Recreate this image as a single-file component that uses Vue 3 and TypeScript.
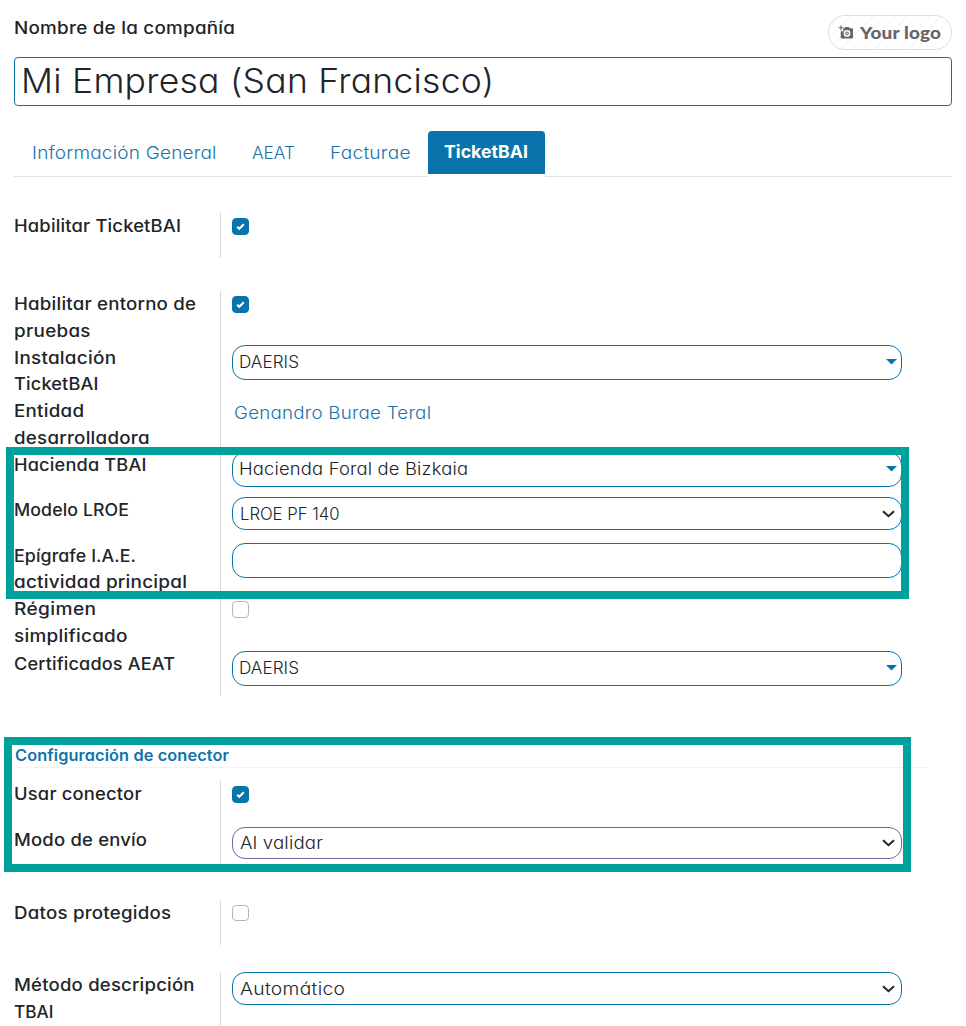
<script setup lang="ts">
import { ref, type Directive } from 'vue'

interface Line { text: string; w: number }
interface Row {
  height: number
  label: Line[]
  kind: 'check' | 'many2one' | 'select' | 'input' | 'link'
  checked?: boolean
  value?: Line
  fieldHeight?: number
  focused?: boolean
  tight?: boolean
}
interface Group { id: string; title?: Line; rows: Row[] }

const l = (text: string, w: number): Line => ({ text, w })

// Widens the letters of a text, with a little tracking, so that it takes the given width in pixels.
const vFit: Directive<HTMLElement, number> = {
  mounted(el, { value }) {
    const natural = el.getBoundingClientRect().width
    const count = (el.textContent ?? '').length
    const scale = 1 + (value / natural - 1) * 0.8
    el.style.letterSpacing = `${(value / scale - natural) / (count - 1)}px`
    el.style.transform = `scaleX(${scale})`
  },
}

const tabs = [
  { name: l('Información General', 184.5), id: 'general' },
  { name: l('AEAT', 43), id: 'aeat' },
  { name: l('Facturae', 80.5), id: 'facturae' },
  { name: l('TicketBAI', 84), id: 'tbai' },
]
const active = ref('tbai')

const groups: Group[] = [
  { id: 'enable', rows: [{ height: 45, kind: 'check', checked: true, label: [l('Habilitar TicketBAI', 167)] }] },
  {
    id: 'main',
    rows: [
      { height: 54, kind: 'check', checked: true, label: [l('Habilitar entorno de', 182), l('pruebas', 76.5)] },
      { height: 53, tight: true, kind: 'many2one', fieldHeight: 35, value: l('DAERIS', 60), label: [l('Instalación', 102), l('TicketBAI', 84.5)] },
      { height: 54, kind: 'link', value: l('Genandro Burae Teral', 197), label: [l('Entidad', 70), l('desarrolladora', 135.5)] },
      { height: 45, kind: 'many2one', fieldHeight: 35, value: l('Hacienda Foral de Bizkaia', 229), label: [l('Hacienda TBAI', 132.5)] },
      { height: 46, kind: 'select', fieldHeight: 33, value: l('LROE PF 140', 99.5), label: [l('Modelo LROE', 115)] },
      { height: 53, tight: true, kind: 'input', fieldHeight: 35, label: [l('Epígrafe I.A.E.', 122), l('actividad principal', 173)] },
      { height: 55, kind: 'check', label: [l('Régimen', 82), l('simplificado', 113.5)] },
      { height: 45, kind: 'many2one', fieldHeight: 35, value: l('DAERIS', 60), label: [l('Certificados AEAT', 161)] },
    ],
  },
  {
    id: 'connector',
    title: l('Configuración de conector', 214),
    rows: [
      { height: 46, kind: 'check', checked: true, label: [l('Usar conector', 127.5)] },
      { height: 45, kind: 'select', fieldHeight: 32, focused: true, value: l('Al validar', 83), label: [l('Modo de envío', 133)] },
    ],
  },
  { id: 'protected', rows: [{ height: 45, kind: 'check', label: [l('Datos protegidos', 157)] }] },
  {
    id: 'method',
    rows: [{ height: 54, kind: 'select', fieldHeight: 33, value: l('Automático', 105), label: [l('Método descripción', 180.5), l('TBAI', 39.5)] }],
  },
]
</script>

<template>
  <main class="page">
    <header class="top">
      <div class="label"><span v-fit="221">Nombre de la compañía</span></div>
      <div class="logo">
        <svg width="16" height="15" viewBox="0 0 16 15" aria-hidden="true">
          <path d="M3 0.4v4.8M0.6 2.8h4.8" stroke="#666" stroke-width="1.1" />
          <path fill="#666" fill-rule="evenodd" d="M6.4 3.2L7.2 2h3.6l.9 1.2h2.3q1 0 1 1v8.3q0 1-1 1H3.7q-1 0-1-1V6.2h2.6V3.2zM9 5a3.4 3.4 0 1 0 0 6.8 3.4 3.4 0 0 0 0-6.8z" />
          <circle cx="9" cy="8.4" r="1.8" fill="#666" />
          <circle cx="9" cy="8.4" r="0.8" fill="#fff" />
        </svg>
        <span v-fit="81">Your logo</span>
      </div>
    </header>
    <div class="company"><span v-fit="473">Mi Empresa (San Francisco)</span></div>

    <nav class="tabs">
      <div v-for="t in tabs" :key="t.id" class="tab" :class="[t.id, { active: t.id === active }]" @click="active = t.id">
        <span v-fit="t.name.w">{{ t.name.text }}</span>
      </div>
      <div class="rest"></div>
    </nav>

    <section v-for="g in groups" :key="g.id" class="group" :class="g.id">
      <h2 v-if="g.title" class="heading"><span v-fit="g.title.w">{{ g.title.text }}</span></h2>
      <div v-for="(r, i) in g.rows" :key="i" class="row" :class="{ tight: r.tight }" :style="{ height: r.height + 'px' }">
        <div class="label">
          <div v-for="line in r.label" :key="line.text" class="line"><span v-fit="line.w">{{ line.text }}</span></div>
        </div>
        <div class="cell">
          <div v-if="r.kind === 'check'" class="check" :class="{ on: r.checked }">
            <svg v-if="r.checked" width="9" height="8" viewBox="0 0 9 8" aria-hidden="true">
              <path d="M1.2 3.7L3.3 5.8L7.8 1.3" fill="none" stroke="#fff" stroke-width="2.1" />
            </svg>
          </div>
          <div v-else-if="r.kind === 'link' && r.value" class="link"><span v-fit="r.value.w">{{ r.value.text }}</span></div>
          <div v-else class="field" :class="[r.kind, { focused: r.focused }]" :style="{ height: r.fieldHeight + 'px' }">
            <span v-if="r.value" v-fit="r.value.w">{{ r.value.text }}</span>
            <svg v-if="r.kind === 'many2one'" class="caret" width="11" height="6" viewBox="0 0 11 6" aria-hidden="true">
              <path d="M0 0h11L5.5 5.5z" fill="#0874ab" />
            </svg>
            <svg v-if="r.kind === 'select'" class="chevron" width="13" height="8" viewBox="0 0 13 8" aria-hidden="true">
              <path d="M1 1.2L6.5 6.2L12 1.2" fill="none" stroke="#212529" stroke-width="2" />
            </svg>
          </div>
        </div>
      </div>
    </section>

    <div class="highlight tax"></div>
    <div class="highlight connector-box"></div>
  </main>
</template>

<style>
html, body { background: #fff; overflow: hidden; }
</style>

<style scoped>
.page {
  position: relative;
  box-sizing: border-box;
  width: 966px;
  height: 1026px;
  padding: 15px 14px 0;
  overflow: hidden;
  background: #fff;
  color: #212529;
  font-family: Inter, "Open Sans", sans-serif;
  font-feature-settings: "cv11";
  font-size: 17px;
  font-weight: 300;
}
.page * { box-sizing: border-box; }
span { display: inline-block; white-space: nowrap; transform-origin: 0 50%; }
.label { font-weight: 550; line-height: 27px; }
.line { height: 27px; }
.tight .line:first-child { height: 26px; }
.top { display: flex; justify-content: space-between; height: 42px; }
.logo {
  display: flex;
  align-items: center;
  gap: 6px;
  width: 124px;
  height: 35px;
  padding-left: 9px;
  border: 1px solid #dcdfe2;
  border-radius: 17px;
  color: #666;
  font: 900 17.5px/33px Lato, sans-serif;
  background: repeating-linear-gradient(135deg, #fff 0 7px, #f6f6f6 7px 8px);
}
.company {
  height: 49px;
  padding-left: 6px;
  border: 1px solid #0874ab;
  border-radius: 4px;
  font-size: 33.5px;
  line-height: 46px;
}
.tabs { display: flex; height: 46px; margin-top: 25px; color: #1c72a8; font-size: 17.5px; }
.tab { padding: 9px 0 0 18px; border-bottom: 1px solid #dee2e6; line-height: 26px; }
.tab.general { width: 220px; }
.tab.aeat { width: 78px; }
.tab.facturae { width: 116px; }
.tab.active {
  width: 117px;
  height: 43px;
  padding: 8px 0 0 16px;
  border: 0;
  border-radius: 4px 4px 0 0;
  background: #0874ab;
  color: #fff;
  font-weight: 650;
}
.rest { flex: 1; border-bottom: 1px solid #dee2e6; }
.group.enable { margin-top: 36px; }
.group.main { margin-top: 33px; }
.group.connector { margin-top: 46px; }
.group.protected { margin-top: 28px; }
.group.method { margin-top: 27px; }
.heading {
  width: 913px;
  height: 26px;
  margin: 0 0 13px 1px;
  border-bottom: 1px solid #f2f3f4;
  color: #1072a9;
  font-size: 15.5px;
  font-weight: 600;
  line-height: 27px;
}
.row { display: grid; grid-template-columns: 206px 682px; }
.cell { padding-left: 11px; border-left: 1px solid #d5d8dc; }
.check {
  display: flex;
  align-items: center;
  justify-content: center;
  width: 17px;
  height: 17px;
  margin-top: 5px;
  border: 1px solid #b3b7bd;
  border-radius: 4px;
}
.protected .check { height: 16px; }
.check.on { border-color: #0874ab; background: #0874ab; }
.check svg { display: block; }
.link { padding: 2px 0 0 2px; color: #1c72a8; line-height: 27px; }
.field {
  display: flex;
  align-items: center;
  justify-content: space-between;
  width: 670px;
  padding: 0 4px 2px 6px;
  border: 1px solid #0874ab;
  border-radius: 13px;
}
.field.select { padding: 0 6px 0 7px; }
.field.focused { border-color: #7165a3; }
.highlight { position: absolute; border: 8px solid #00a19a; pointer-events: none; }
.highlight.tax { left: 6px; top: 447px; width: 903px; height: 152px; }
.highlight.connector-box { left: 4px; top: 737px; width: 907px; height: 135px; }
</style>
